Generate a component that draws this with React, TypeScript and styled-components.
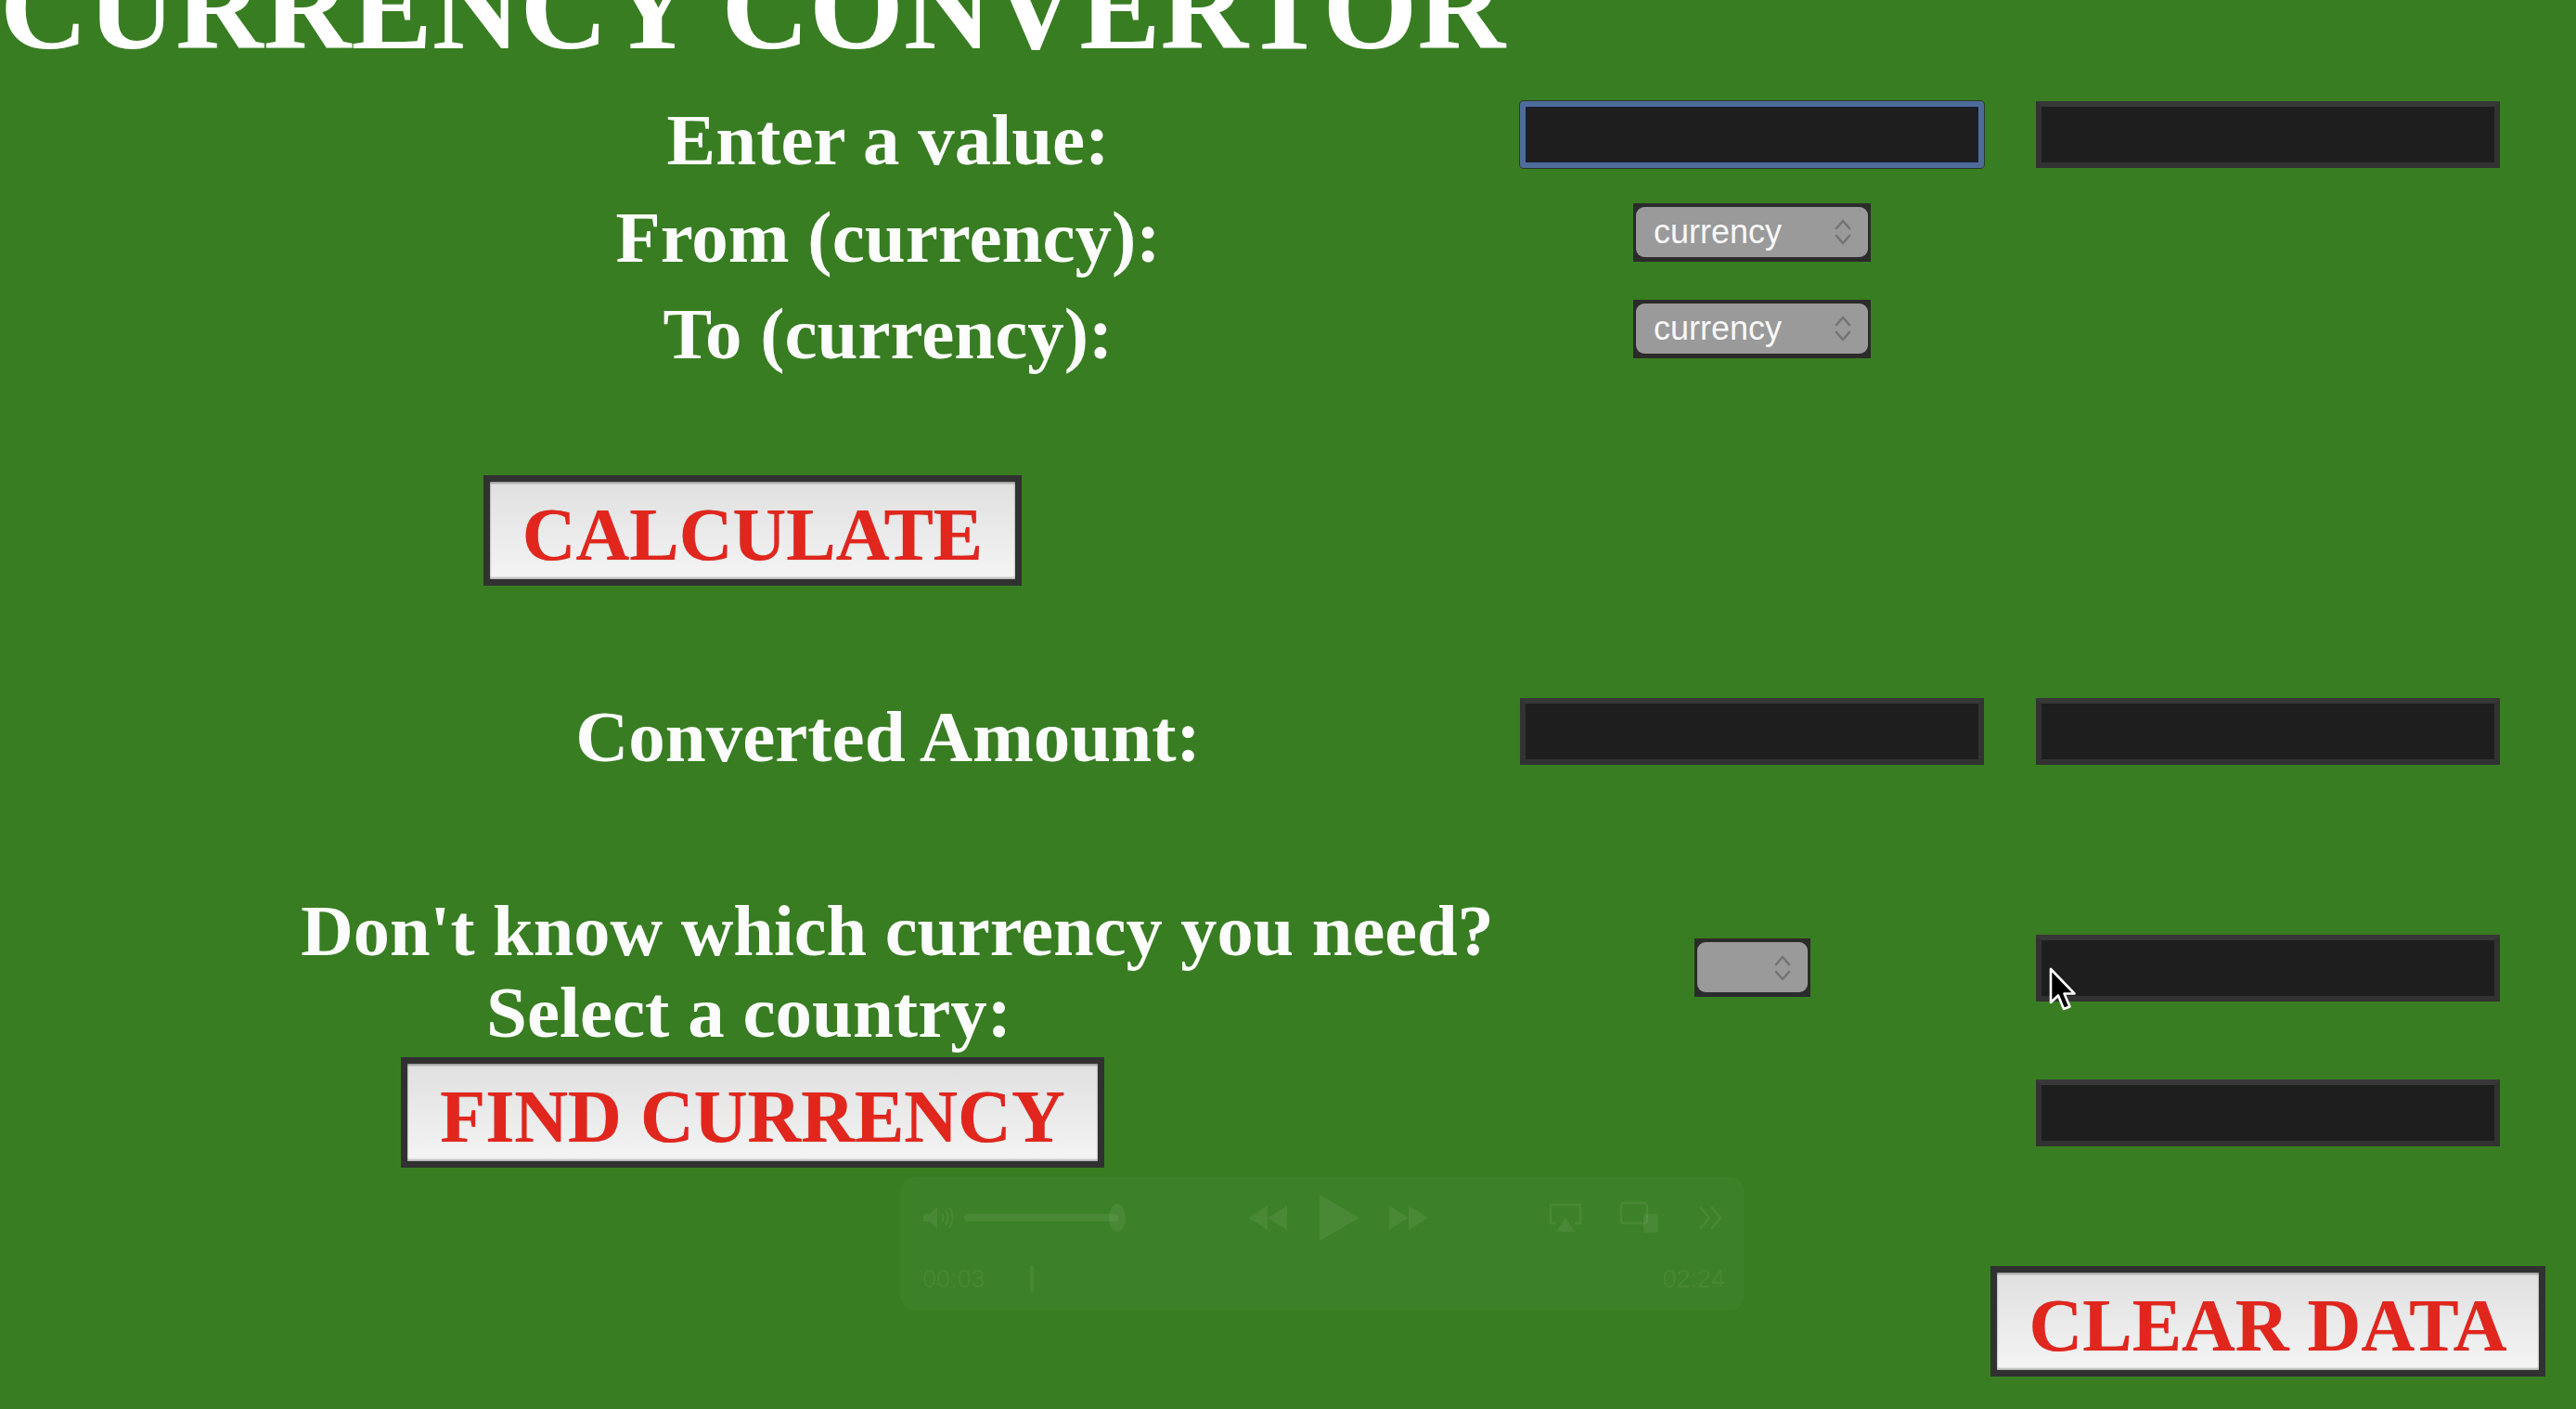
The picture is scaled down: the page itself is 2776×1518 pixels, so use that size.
import React from "react";
import styled, { createGlobalStyle } from "styled-components";

const GlobalStyle = createGlobalStyle`
  html, body {
    margin: 0;
    padding: 0;
    background: #387d22;
  }
  body {
    width: 2776px;
    height: 1518px;
    overflow: hidden;
    font-family: "Liberation Serif", "Times New Roman", serif;
  }
`;

const Page = styled.main`
  position: relative;
  width: 2776px;
  height: 1518px;
  overflow: hidden;
  background: #387d22;
`;

const Title = styled.h1`
  margin: -57px 0 0 0;
  font: bold 131px/130px "Liberation Serif", "Times New Roman", serif;
  color: #ffffff;
  white-space: nowrap;
`;

const Form = styled.section`
  display: flex;
  flex-direction: column;
  padding-left: 332px;
`;

const FormRow = styled.div<{ $mt: number }>`
  display: grid;
  grid-template-columns: 1250px 500px 500px;
  column-gap: 56px;
  align-items: center;
  margin-top: ${(p) => p.$mt}px;
`;

const Label = styled.div<{
  $offset?: number;
  $pad?: number;
  $shift?: number;
  $size?: number;
}>`
  grid-column: 1;
  box-sizing: border-box;
  padding-top: ${(p) => (p.$pad ?? 12)}px;
  padding-right: ${(p) => p.$offset ?? 0}px;
  padding-left: ${(p) => p.$shift ?? 0}px;
  font: bold ${(p) => p.$size ?? 79}px/88px "Liberation Serif", "Times New Roman", serif;
  color: #fcfcfc;
  text-align: center;
  white-space: nowrap;
`;

const LabelStack = styled.div`
  grid-column: 1;
  display: flex;
  flex-direction: column;
  align-items: center;
  padding-top: 9px;
`;

const Slot = styled.div<{ $col: number }>`
  grid-column: ${(p) => p.$col};
  display: flex;
  justify-content: center;
  align-items: center;
`;

const ButtonCell = styled.div`
  grid-column: 1;
  display: flex;
  justify-content: center;
  padding-right: 292px;
`;

const TextField = styled.input<{ $focused?: boolean }>`
  box-sizing: border-box;
  width: 500px;
  height: 72px;
  margin: 0;
  padding: 0 12px;
  background: #1e1e1e;
  border: 6px solid ${(p) => (p.$focused ? "#4e6c99" : "#323232")};
  border-top-color: ${(p) => (p.$focused ? "#4e6c99" : "#383838")};
  border-radius: ${(p) => (p.$focused ? "4px" : "0")};
  box-shadow: ${(p) =>
    p.$focused ? "0 0 0 1px #2a3a2a, inset 0 0 0 1px #16203a" : "none"};
  outline: none;
  color: #eeeeee;
  font: 36px "Liberation Sans", Arial, sans-serif;
`;

const SelectFrame = styled.span`
  position: relative;
  display: inline-flex;
  background: #2b2b2b;
  padding: 4px 3px 5px 3px;
`;

const SelectBox = styled.select<{ $w: number }>`
  appearance: none;
  -webkit-appearance: none;
  box-sizing: border-box;
  width: ${(p) => p.$w}px;
  height: 54px;
  margin: 0;
  border: 0;
  border-radius: 9px;
  background: #9a9a9a;
  color: #f8f8f8;
  font: 36px "Liberation Sans", Arial, sans-serif;
  padding: 0 0 0 19px;
  outline: none;
`;

const Chevrons = styled.svg`
  position: absolute;
  right: 20px;
  top: 50%;
  transform: translateY(-50%);
  pointer-events: none;
`;

const ActionButton = styled.button`
  box-sizing: border-box;
  height: 119px;
  margin: 0;
  padding: 10px 35px 0;
  border: 7px solid #313131;
  background: linear-gradient(#e0e0e0, #f4f4f4);
  box-shadow: inset 0 2px 2px rgba(0, 0, 0, 0.3),
    inset 0 -2px 2px rgba(0, 0, 0, 0.25);
  color: #e1261d;
  font: bold 80px/95px "Liberation Serif", "Times New Roman", serif;
  white-space: nowrap;
  text-shadow: 0 0 1px rgba(140, 0, 0, 0.45);
  cursor: pointer;
`;

/* faded video-player controls lying over the page */
const PlayerOverlay = styled.div`
  position: absolute;
  left: 970px;
  top: 1268px;
  width: 910px;
  height: 144px;
  box-sizing: border-box;
  padding: 20px 21px 0 24px;
  border-radius: 16px;
  background: rgba(255, 255, 255, 0.022);
`;

const ControlsRow = styled.div`
  display: flex;
  justify-content: space-between;
  align-items: center;
  height: 48px;
`;

const ControlGroup = styled.div<{ $gap: number }>`
  display: flex;
  align-items: center;
  gap: ${(p) => p.$gap}px;
`;

const TimeRow = styled.div`
  display: flex;
  align-items: center;
  margin-top: 26px;
  height: 32px;
  font: 27px "Liberation Sans", Arial, sans-serif;
  color: rgba(255, 255, 255, 0.06);
`;

const Scrubber = styled.span`
  width: 4px;
  height: 30px;
  margin-left: 48px;
  border-radius: 2px;
  background: rgba(255, 255, 255, 0.06);
`;

const EndTime = styled.span`
  margin-left: auto;
`;

const Cursor = styled.svg`
  position: absolute;
  left: 2207px;
  top: 1042px;
  pointer-events: none;
`;

const ICON = "rgba(255,255,255,0.065)";

const ChevronPair: React.FC = () => (
  <Chevrons width="20" height="30" viewBox="0 0 20 30">
    <path
      d="M3 11 L10 3 L17 11 M3 19 L10 27 L17 19"
      fill="none"
      stroke="#747474"
      strokeWidth="2.6"
      strokeLinecap="round"
      strokeLinejoin="round"
    />
  </Chevrons>
);

const CurrencySelect: React.FC<{ width: number; label?: string }> = ({
  width,
  label,
}) => (
  <SelectFrame>
    <SelectBox $w={width} defaultValue="">
      <option value="">{label ?? ""}</option>
    </SelectBox>
    <ChevronPair />
  </SelectFrame>
);

export default function App() {
  return (
    <Page>
      <GlobalStyle />
      <Title>CURRENCY CONVERTOR</Title>

      <Form>
        <FormRow $mt={22}>
          <Label>Enter a value:</Label>
          <Slot $col={2}>
            <TextField $focused />
          </Slot>
          <Slot $col={3}>
            <TextField />
          </Slot>
        </FormRow>

        <FormRow $mt={5}>
          <Label>From (currency):</Label>
          <Slot $col={2}>
            <CurrencySelect width={250} label="currency" />
          </Slot>
        </FormRow>

        <FormRow $mt={4}>
          <Label>To (currency):</Label>
          <Slot $col={2}>
            <CurrencySelect width={250} label="currency" />
          </Slot>
        </FormRow>

        <FormRow $mt={108}>
          <ButtonCell>
            <ActionButton>CALCULATE</ActionButton>
          </ButtonCell>
        </FormRow>

        <FormRow $mt={107}>
          <Label>Converted Amount:</Label>
          <Slot $col={2}>
            <TextField />
          </Slot>
          <Slot $col={3}>
            <TextField />
          </Slot>
        </FormRow>

        <FormRow $mt={112}>
          <LabelStack>
            <Label $pad={0} $shift={20} $size={78.4}>
              Don't know which currency you need?
            </Label>
            <Label $pad={0} $offset={300}>
              Select a country:
            </Label>
          </LabelStack>
          <Slot $col={2}>
            <CurrencySelect width={119} />
          </Slot>
          <Slot $col={3}>
            <TextField />
          </Slot>
        </FormRow>

        <FormRow $mt={4}>
          <ButtonCell>
            <ActionButton>FIND CURRENCY</ActionButton>
          </ButtonCell>
          <Slot $col={3}>
            <TextField />
          </Slot>
        </FormRow>

        <FormRow $mt={106}>
          <Slot $col={3}>
            <ActionButton>CLEAR DATA</ActionButton>
          </Slot>
        </FormRow>
      </Form>

      <PlayerOverlay>
        <ControlsRow>
          <ControlGroup $gap={9}>
            <svg width="36" height="26" viewBox="0 0 36 26">
              <path d="M1 9 H8 L16 1 V25 L8 17 H1 Z" fill={ICON} />
              <path
                d="M21 8 Q24 13 21 18 M25 5 Q30 13 25 21 M29 2 Q36 13 29 24"
                fill="none"
                stroke={ICON}
                strokeWidth="2"
              />
            </svg>
            <svg width="176" height="32" viewBox="0 0 176 32">
              <rect x="0" y="12" width="166" height="8" rx="4" fill={ICON} />
              <ellipse cx="165" cy="16" rx="9" ry="15" fill={ICON} />
            </svg>
          </ControlGroup>
          <ControlGroup $gap={30}>
            <svg width="44" height="28" viewBox="0 0 44 28">
              <path d="M22 1 L22 27 L1 14 Z M43 1 L43 27 L22 14 Z" fill={ICON} />
            </svg>
            <svg width="48" height="54" viewBox="0 0 48 54">
              <path d="M4 2 L47 27 L4 52 Z" fill={ICON} />
            </svg>
            <svg width="44" height="28" viewBox="0 0 44 28">
              <path d="M1 1 L1 27 L22 14 Z M22 1 L22 27 L43 14 Z" fill={ICON} />
            </svg>
          </ControlGroup>
          <ControlGroup $gap={40}>
            <svg width="36" height="32" viewBox="0 0 36 32">
              <path
                d="M8 22 H2 V2 H34 V22 H28"
                fill="none"
                stroke={ICON}
                strokeWidth="2.5"
              />
              <path d="M18 16 L28 31 H8 Z" fill={ICON} />
            </svg>
            <svg width="44" height="36" viewBox="0 0 44 36">
              <rect
                x="2"
                y="2"
                width="28"
                height="22"
                rx="3"
                fill="none"
                stroke={ICON}
                strokeWidth="2.5"
              />
              <rect x="26" y="14" width="16" height="20" rx="3" fill={ICON} />
            </svg>
            <svg width="30" height="28" viewBox="0 0 30 28">
              <path
                d="M3 2 L13 14 L3 26 M15 2 L25 14 L15 26"
                fill="none"
                stroke={ICON}
                strokeWidth="2.5"
              />
            </svg>
          </ControlGroup>
        </ControlsRow>
        <TimeRow>
          <span>00:03</span>
          <Scrubber />
          <EndTime>02:24</EndTime>
        </TimeRow>
      </PlayerOverlay>

      <Cursor width="34" height="52" viewBox="0 0 34 52">
        <path
          d="M3 2 L3 38 L11 30.5 L17 45 L23.5 42.5 L17.5 28.5 L28.5 28.5 Z"
          fill="#000"
          stroke="#fff"
          strokeWidth="2.6"
          strokeLinejoin="round"
        />
      </Cursor>
    </Page>
  );
}
